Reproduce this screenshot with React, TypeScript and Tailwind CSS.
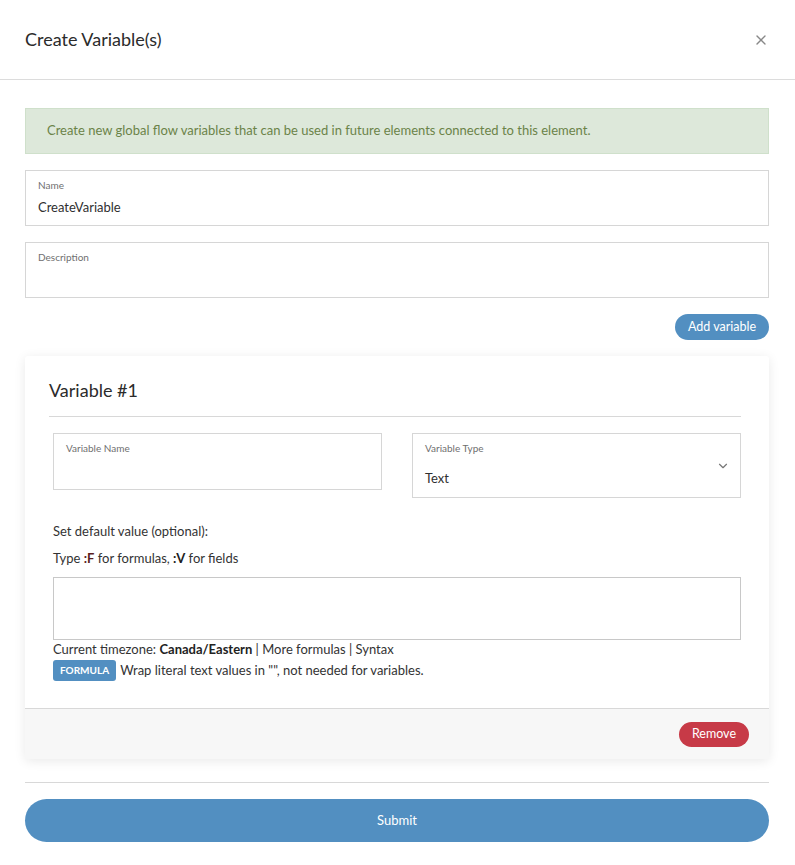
import { X, ChevronDown } from 'lucide-react';

function FloatField({ label, value, className = '' }: { label: string; value?: string; className?: string }) {
  return (
    <div className={`border border-[#d6d6d6] bg-white px-3 pt-[7px] ${className}`}>
      <div className="text-[10px] leading-[14px] text-[#6f6f6f]">{label}</div>
      {value ? <div className="mt-[7px] text-[13px] leading-[16px] text-[#2f2f2f]">{value}</div> : null}
    </div>
  );
}

export default function App() {
  return (
    <div className="min-h-screen w-[795px] bg-white text-[#333] font-['Lato','Noto_Sans',sans-serif]">
      <div className="flex h-[80px] items-center justify-between border-b border-[#dcdcdc] pl-[25px] pr-[26px]">
        <h1 className="text-[18px] font-normal text-[#2b2b2b]">Create Variable(s)</h1>
        <X className="h-[16px] w-[16px] text-[#888]" strokeWidth={2} />
      </div>

      <div className="pl-[25px] pr-[26px] pt-[28px]">
        <div className="flex h-[46px] items-center border border-[#cfe0cb] bg-[#dde8da] px-[21px] text-[13px] text-[#6b8348]">
          Create new global flow variables that can be used in future elements connected to this element.
        </div>

        <FloatField label="Name" value="CreateVariable" className="mt-[16px] h-[56px]" />
        <FloatField label="Description" className="mt-[16px] h-[56px]" />

        <div className="mt-[16px] flex justify-end">
          <button className="h-[26px] rounded-full bg-[#528fc1] px-[13px] text-[12.5px] text-white">Add variable</button>
        </div>

        <div className="mt-[16px] rounded-[3px] bg-white shadow-[0_2px_12px_rgba(0,0,0,0.09)]">
          <div className="pl-[24px] pr-[28px] pt-[22px] pb-[27px]">
            <h2 className="text-[18px] leading-[24px] text-[#2b2b2b]">Variable #1</h2>
            <div className="mt-[14px] border-t border-[#d8d8d8]" />
            <div className="mt-[16px] grid grid-cols-2 gap-[30px] pl-[4px]">
              <FloatField label="Variable Name" className="h-[57px]" />
              <div className="relative h-[65px] border border-[#d6d6d6] bg-white px-3 pt-[7px]">
                <div className="text-[10px] leading-[14px] text-[#6f6f6f]">Variable Type</div>
                <div className="mt-[15px] text-[13px] leading-[16px] text-[#2f2f2f]">Text</div>
                <ChevronDown className="absolute right-[10px] top-[25px] h-[14px] w-[14px] text-[#777]" />
              </div>
            </div>
            <div className="pl-[4px]">
              <p className="mt-[25px] text-[13px] leading-[16px] text-[#333]">Set default value (optional):</p>
              <p className="mt-[11px] text-[13px] leading-[16px] text-[#333]">
                Type <b className="text-[#5a1d1d]">:F</b> for formulas, <b className="text-[#1d1d1d]">:V</b> for fields
              </p>
              <div className="mt-[11px] h-[63px] border border-[#c8c8c8]" />
              <p className="mt-[1px] text-[13px] leading-[16px] text-[#333]">
                Current timezone: <b className="font-bold text-[#222]">Canada/Eastern</b> | More formulas | Syntax
              </p>
              <div className="mt-[3px] flex items-center gap-[4px]">
                <span className="inline-flex h-[21px] items-center rounded-[3px] bg-[#528fc1] px-[7px] text-[10px] font-bold text-white">FORMULA</span>
                <span className="text-[13px] text-[#333]">Wrap literal text values in "", not needed for variables.</span>
              </div>
            </div>
          </div>
          <div className="flex h-[51px] items-center justify-end border-t border-[#d8d8d8] bg-[#f7f7f7] pr-[20px]">
            <button className="h-[25px] rounded-full bg-[#c73a47] px-[13px] text-[12.5px] text-white">Remove</button>
          </div>
        </div>

        <div className="mt-[23px] border-t border-[#d8d8d8]" />
        <button className="mt-[16px] h-[43px] w-full rounded-full bg-[#528fc1] text-[13px] text-white">Submit</button>
      </div>
    </div>
  );
}
